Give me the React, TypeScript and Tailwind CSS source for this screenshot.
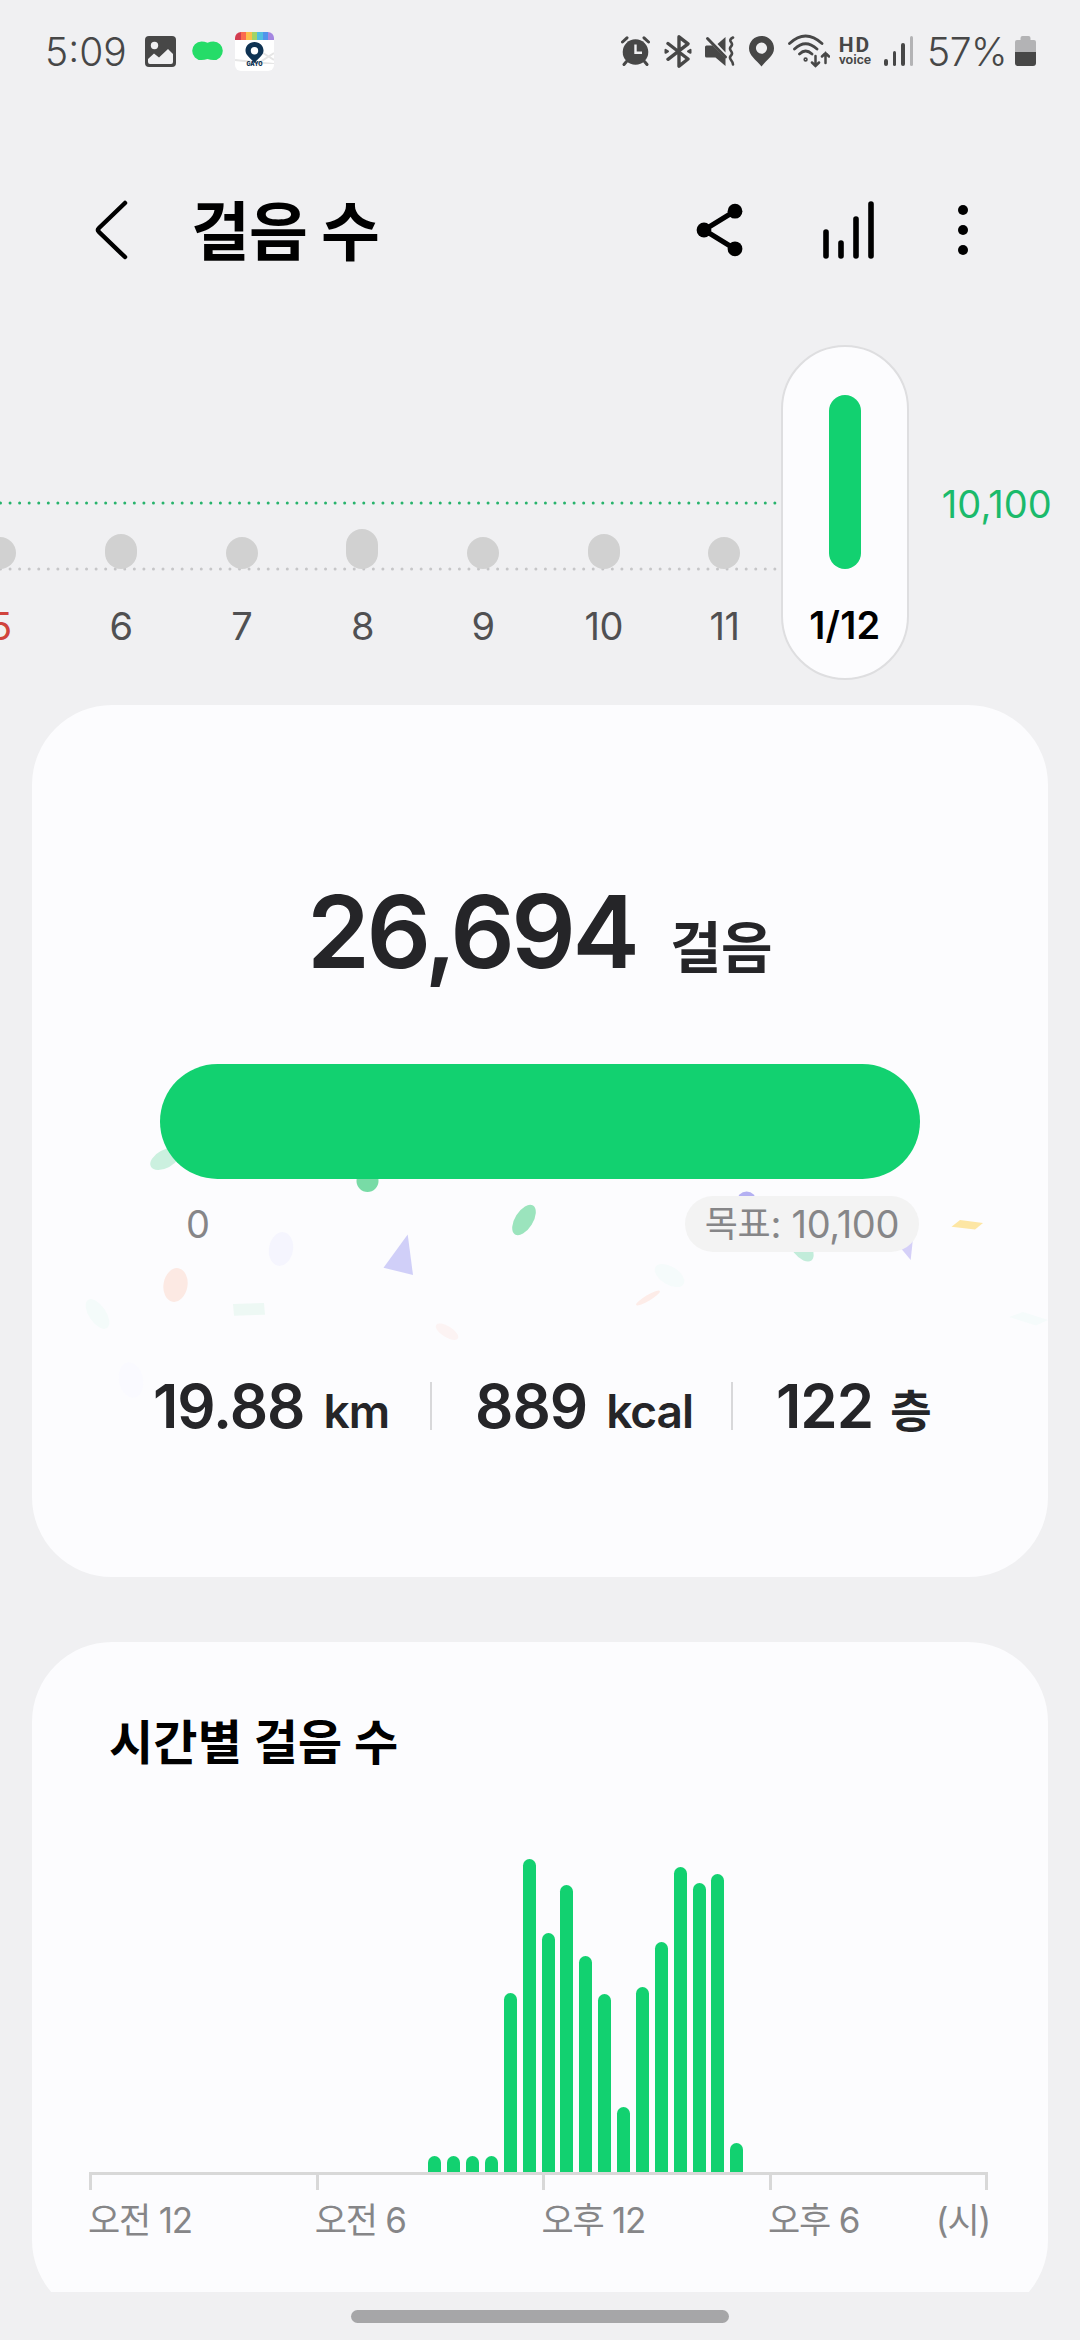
import clsx from 'clsx'

const days = [
  { label: '5', height: 32, holiday: true },
  { label: '6', height: 35 },
  { label: '7', height: 32 },
  { label: '8', height: 40 },
  { label: '9', height: 32 },
  { label: '10', height: 35 },
  { label: '11', height: 32 },
]

// one bar per half hour, the first one starts at 9:00
const hourly = [16, 16, 16, 16, 179, 313, 239, 287, 216, 178, 65, 185, 230, 305, 289, 298, 29]

const axisLabels = ['오전 12', '오전 6', '오후 12', '오후 6']

const StatusBar = () => (
  <div className="flex h-[102px] shrink-0 items-center pl-[45px] text-[#474747]">
    <span className="w-[100px] text-[39px] leading-none font-light">5:09</span>

    {/* Gallery */}
    <svg width="31" height="31" viewBox="0 0 31 31">
      <rect width="31" height="31" rx="4" fill="#474747" />
      <circle cx="9.5" cy="9.5" r="3.7" fill="#f0f0f2" />
      <path
        d="M3 23l6-5.500 5 4 9-8.500 5 5V26q0 2-2 2H5q-2 0-2-2z"
        fill="#f0f0f2"
        strokeLinejoin="round"
      />
    </svg>

    <svg width="31" height="20" viewBox="0 0 31 20" className="ml-4">
      <path
        d="M9.500 0.500q3 0 6 1.200 3-1.200 6-1.200a9.200 9.200 0 0 1 0 18.600q-3 0-6-1-3 1-6 1a9.200 9.200 0 0 1 0-18.600z"
        fill="#25dc68"
      />
    </svg>

    <span className="relative ml-3 flex h-[39px] w-[39px] flex-col items-center overflow-hidden rounded-[6px] bg-white">
      <span className="flex h-2 w-full shrink-0">
        <i className="flex-1 bg-[#d23c50]" />
        <i className="flex-1 bg-[#fb6b4f]" />
        <i className="flex-1 bg-[#fcc04b]" />
        <i className="flex-1 bg-[#a1d468]" />
        <i className="flex-1 bg-[#50bfe0]" />
        <i className="flex-1 bg-[#5094ec]" />
        <i className="flex-1 bg-[#a486e0]" />
      </span>
      <svg width="39" height="24" viewBox="0 0 39 24" className="shrink-0">
        <path d="M0 20l39 4M22 24L39 13M28 13l11 7" stroke="#e6e6e6" strokeWidth="2" />
        <path
          d="M19.500 2c-5.200 0-9 4-9 8.600 0 4.400 3.500 6.400 9 12.400 5.500-6 9-8 9-12.400C28.500 6 24.700 2 19.500 2z"
          fill="#0f3353"
        />
        <circle cx="19.500" cy="10.700" r="3.700" fill="#fff" />
      </svg>
      <span className="-mt-0.5 text-[5.500px] leading-none font-black text-[#0f3353]">GAYO</span>
    </span>

    <svg width="29" height="30" viewBox="0 0 29 30" className="ml-[347px]">
      <circle cx="14.500" cy="16" r="12.800" fill="#474747" />
      <path
        d="M1.500 6L6 1.800M27.500 6L23 1.800M5.500 25.500L3 28.500M23.500 25.500l2.500 3"
        stroke="#474747"
        strokeWidth="3"
        strokeLinecap="round"
      />
      <path d="M14.500 8.500v8.300h6.500" fill="none" stroke="#f0f0f2" strokeWidth="2.400" />
    </svg>

    <svg
      width="28"
      height="33"
      viewBox="0 0 28 33"
      className="ml-[14px]"
      fill="none"
      stroke="#474747"
      strokeWidth="3.400"
      strokeLinecap="round"
      strokeLinejoin="round"
    >
      <path d="M4 8.500l20 15.500-9 7.200V1.800l9 7L4 24.300" />
      <path d="M1.500 14.800v3l2.500-1.500zM26.500 14.800v3L24 16.300z" strokeWidth="2" fill="#474747" />
    </svg>

    <svg width="30" height="30" viewBox="0 0 30 30" className="ml-[13px]">
      <path
        d="M1.500 9.500h6l13 13V30L10.500 21.500h-9Q0 21.500 0 20v-9q0-1.500 1.500-1.500zM20.500 1v15.500L12.500 8z"
        fill="#474747"
      />
      <path d="M2.500 2.500l18 18.500" stroke="#474747" strokeWidth="3" strokeLinecap="round" />
      <path
        d="M28 1.500q-4 2-2 4.500t0 4.500-0 4.500 0 4.500 0 4.500 2 4.500"
        fill="none"
        stroke="#474747"
        strokeWidth="2.600"
        strokeLinecap="round"
      />
    </svg>

    <svg width="25" height="31" viewBox="0 0 25 31" className="ml-[14px]">
      <path
        fillRule="evenodd"
        d="M12.500 0C5.500 0 0 5.500 0 12.300 0 20 7 23.500 12.500 30.500 18 23.500 25 20 25 12.300 25 5.500 19.500 0 12.500 0zm0 6.500a5.600 5.600 0 1 1 0 11.200 5.600 5.600 0 0 1 0-11.200z"
        fill="#474747"
      />
    </svg>

    <svg
      width="42"
      height="34"
      viewBox="0 0 42 34"
      className="ml-[14px]"
      fill="none"
      stroke="#474747"
      strokeWidth="2.800"
      strokeLinecap="round"
    >
      <path d="M1.500 9.500Q17.500-5.500 34 9.500M6.500 15Q17.500 4.500 29 15M11.500 20Q17.500 14 24 20" />
      <circle cx="17.600" cy="25.500" r="0.800" />
      <path d="M27.500 22v10M24 28.500l3.500 3.500 3.500-3.500M37.500 29V19M34 22.500l3.500-3.500 3.500 3.500" strokeWidth="2.500" />
    </svg>

    <span className="ml-2 flex w-[34px] flex-col items-center font-['Roboto']">
      <span className="text-[21px] leading-[16px] font-bold tracking-[2px]">HD</span>
      <span className="text-[13.500px] leading-[13px] font-semibold">voice</span>
    </span>

    <span className="ml-3 flex h-[30px] items-end gap-[5px]">
      <i className="h-[7px] w-[3.500px] rounded-full bg-[#474747]" />
      <i className="h-[15px] w-[3.500px] rounded-full bg-[#474747]" />
      <i className="h-[23px] w-[3.500px] rounded-full bg-[#474747]" />
      <i className="h-[30px] w-[3.500px] rounded-full bg-[#b3b3b5]" />
    </span>

    <span className="ml-[14px] w-[86px] text-[39px] leading-none font-light tracking-[-0.500px]">
      57%
    </span>

    <svg width="21" height="30" viewBox="0 0 21 30" className="ml-0.5">
      <path d="M0 16V6q0-2 2-2h3.500V2q0-2 2-2h6q2 0 2 2v2H19q2 0 2 2v10z" fill="#b3b3b5" />
      <path d="M0 16h21v11q0 3-3 3H3q-3 0-3-3z" fill="#474747" />
    </svg>
  </div>
)

const Header = () => (
  <header className="flex h-[236px] shrink-0 items-center pt-5 pl-[94px]">
    <svg width="34" height="62" viewBox="0 0 34 62">
      <path
        d="M31 4L5 29q-2 2 0 4l26 25"
        fill="none"
        stroke="#000"
        strokeWidth="4.500"
        strokeLinecap="round"
      />
    </svg>

    <h1 className="mt-1 ml-[63px] w-[200px] text-[64px] leading-none font-bold tracking-[-1px] whitespace-nowrap">
      걸음 수
    </h1>

    <svg width="48" height="56" viewBox="0 0 48 56" className="ml-[305px]">
      <path d="M39 9L8 28l31 19" fill="none" stroke="#000" strokeWidth="5" />
      <circle cx="8" cy="28" r="7.400" />
      <circle cx="39" cy="9.200" r="7.400" />
      <circle cx="39" cy="46.800" r="7.400" />
    </svg>

    <svg width="52" height="60" viewBox="0 0 52 60" className="ml-[79px]">
      <path
        d="M3 32v24M18 43v13M33 19v37M48 4v52"
        stroke="#000"
        strokeWidth="5.600"
        strokeLinecap="round"
      />
    </svg>

    <svg width="12" height="52" viewBox="0 0 12 52" className="ml-[82px]">
      <circle cx="6" cy="6" r="5" />
      <circle cx="6" cy="26" r="5" />
      <circle cx="6" cy="46" r="5" />
    </svg>
  </header>
)

const WeekChart = () => (
  <section className="relative flex h-[367px] shrink-0">
    {/* goal line and base line */}
    <svg width="780" height="80" viewBox="0 0 780 80" className="absolute top-[160px] left-0">
      <path
        d="M0.500 5H778"
        stroke="#27b36c"
        strokeWidth="3"
        strokeLinecap="round"
        strokeDasharray="0 9.560"
      />
      <path
        d="M0.500 71H778"
        stroke="#c6c6c8"
        strokeWidth="3"
        strokeLinecap="round"
        strokeDasharray="0 9.560"
      />
    </svg>

    <div className="relative -ml-[60px] flex h-[307px] items-end">
      {days.map(({ label, height, holiday }) => (
        <div key={label} className="flex w-[120.700px] flex-col items-center">
          <i className="w-8 rounded-full bg-[#d1d1d1]" style={{ height }} />
          <span
            className={clsx(
              'mt-[38px] text-[38px] leading-[38px] tracking-[-0.500px]',
              holiday ? 'text-[#d0433c]' : 'text-[#505052]'
            )}
          >
            {label}
          </span>
        </div>
      ))}
    </div>

    <div className="relative mt-[7px] -ml-[4px] flex h-[335px] w-[128px] flex-col items-center rounded-full border-2 border-[#dedee0] bg-[#fcfcfe] pt-12">
      <i className="h-[174px] w-8 shrink-0 rounded-full bg-[#12d170]" />
      <span className="mt-[37px] text-[38px] leading-[38px] font-semibold tracking-[0.200px] text-black">
        1/12
      </span>
    </div>

    <span className="mt-[147px] ml-[33px] text-[38px] leading-[38px] tracking-[0.100px] text-[#1bba6b]">
      10,100
    </span>
  </section>
)

const Confetti = () => (
  <svg width="1016" height="872" viewBox="32 705 1016 872" className="absolute top-0 left-0">
    <ellipse cx="165" cy="1159" rx="16" ry="9" transform="rotate(-28 165 1159)" fill="#cbf0df" />
    <circle cx="367.500" cy="1181" r="11" fill="#78dba6" />
    <ellipse cx="524" cy="1220" rx="17" ry="9" transform="rotate(-58 524 1220)" fill="#9be4bd" />
    <ellipse cx="281" cy="1249" rx="12" ry="17" transform="rotate(10 281 1249)" fill="#f5f5fe" />
    <path d="M407.700 1234.500L383.500 1267.700 413 1275z" fill="#d0cff8" />
    <ellipse cx="175.500" cy="1285" rx="12" ry="17" transform="rotate(10 175.500 1285)" fill="#fce9e3" />
    <ellipse cx="97.500" cy="1314" rx="17" ry="8.500" transform="rotate(56 97.500 1314)" fill="#f4fbfa" />
    <path d="M233 1304l31-1 1 11.700-31 1z" fill="#edf8f4" />
    <ellipse cx="447" cy="1331.700" rx="12.800" ry="5.500" transform="rotate(32 447 1331.700)" fill="#fcf3f3" />
    <ellipse cx="131" cy="1380" rx="12" ry="18" transform="rotate(-12 131 1380)" fill="#fafaff" />
    <circle cx="746.600" cy="1201.500" r="10" fill="#b4b0f2" />
    <ellipse cx="801" cy="1247" rx="17" ry="9" transform="rotate(52 801 1247)" fill="#c2ecda" />
    <path d="M913 1238l-14 8 11.700 14z" fill="#d5d0f8" />
    <path d="M951.500 1226.700l8.500-6.700 23 3-8 6.500z" fill="#fde6a4" />
    <ellipse cx="669.500" cy="1275.500" rx="16.500" ry="9" transform="rotate(32 669.500 1275.500)" fill="#f5fbfb" />
    <ellipse cx="648" cy="1298" rx="13.800" ry="2.800" transform="rotate(-31 648 1298)" fill="#fdece8" />
    <path d="M1009 1317l14-5 25 8-12 5.600z" fill="#f5fbfb" />
  </svg>
)

const SummaryCard = () => (
  <section className="relative mx-8 flex h-[872px] shrink-0 flex-col overflow-hidden rounded-[80px] bg-[#fcfcfe] text-[#252528]">
    <Confetti />

    <div className="relative mt-[176px] flex items-baseline pl-[275px] font-semibold">
      <span className="w-[363px] text-[101px] leading-[101px] tracking-[-3.500px]">26,694</span>
      <span className="text-[56px] leading-[56px] font-bold tracking-[-0.500px]">걸음</span>
    </div>

    <div className="relative mx-32 mt-[82px] h-[115px] rounded-full bg-[#12d170]" />

    <div className="relative mt-[17px] flex items-center justify-between pr-[129px] pl-[154px] text-[38px] leading-none text-[#868688]">
      <span>0</span>
      <span className="flex h-14 w-[234px] items-center justify-center rounded-full bg-[#f3f3f3] tracking-[-0.300px]">
        <span className="text-[36px]">목표</span>:&nbsp;10,100
      </span>
    </div>

    <div className="relative mt-[124px] flex items-center text-[60px] leading-[60px] font-semibold tracking-[-1px]">
      <p className="flex w-[398px] items-baseline pl-[121px]">
        19.88
        <span className="ml-[19px] text-[46px] leading-[46px]">km</span>
      </p>
      <i className="h-12 w-0.5 bg-[#d8d8da]" />
      <p className="ml-[43px] flex w-[256px] items-baseline">
        889
        <span className="ml-[19px] text-[46px] leading-[46px]">kcal</span>
      </p>
      <i className="h-12 w-0.5 bg-[#d8d8da]" />
      <p className="ml-[43px] flex items-baseline">
        122
        <span className="ml-[17px] text-[45px] leading-[45px] font-bold">층</span>
      </p>
    </div>
  </section>
)

const HourlyCard = () => (
  <div className="mt-[65px] h-[650px] shrink-0 overflow-hidden px-8">
    <section className="flex h-[678px] flex-col rounded-[80px] bg-[#fcfcfe] pt-[77px]">
      <h2 className="pl-[77px] text-[48px] leading-[48px] font-bold tracking-[0.200px]">
        시간별 걸음 수
      </h2>

      <div className="ml-[56.500px] flex h-[405px] items-end gap-[5.880px] pl-[339.800px]">
        {hourly.map((height, i) => (
          <i key={i} className="w-[13px] rounded-t-full bg-[#12d170]" style={{ height }} />
        ))}
      </div>

      <div className="ml-[57px] flex h-[18px] w-[899px] border-t-3 border-r-3 border-[#d8d8d8]">
        {axisLabels.map((label) => (
          <i key={label} className="w-[226.700px] shrink-0 border-l-3 border-[#d8d8d8] last:shrink" />
        ))}
      </div>

      <div className="mt-[13px] ml-[56px] flex w-[902px] text-[35px] leading-[35px] tracking-[-1.200px] text-[#868688]">
        {axisLabels.map((label) => (
          <span key={label} className="w-[226.700px] shrink-0 last-of-type:w-auto">
            {label}
          </span>
        ))}
        <b className="ml-auto font-normal">(시)</b>
      </div>
    </section>
  </div>
)

export default function App() {
  return (
    <div className="flex h-[2340px] w-[1080px] flex-col overflow-hidden bg-[#f0f0f2] font-['Inter','Noto_Sans_CJK_KR',sans-serif] text-black">
      <StatusBar />
      <Header />
      <WeekChart />
      <SummaryCard />
      <HourlyCard />

      {/* Home indicator */}
      <div className="mx-auto mt-[18px] h-[13px] w-[378px] shrink-0 rounded-full bg-[#a6a6a8]" />
    </div>
  )
}
